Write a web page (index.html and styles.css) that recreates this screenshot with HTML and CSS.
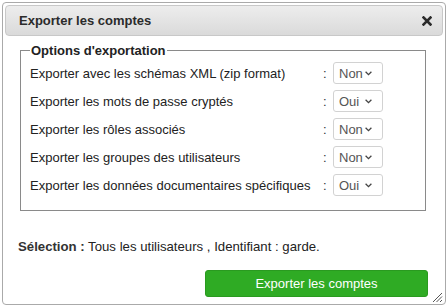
FILE: index.html
```html
<!DOCTYPE html>
<html lang="fr">
<head>
<meta charset="utf-8">
<title>Exporter les comptes</title>
<link rel="stylesheet" href="styles.css">
</head>
<body>
<div class="dialog">
  <div class="titlebar">
    <span class="title">Exporter les comptes</span>
    <svg class="close" width="10" height="10" viewBox="0 0 10 10"><path d="M1.5 1.5 L8.5 8.5 M8.5 1.5 L1.5 8.5" stroke="#2b2b2b" stroke-width="2.6" stroke-linecap="square"/></svg>
  </div>
  <div class="content">
    <fieldset class="options">
      <legend>Options d'exportation</legend>
      <div class="grid">
        <span class="label">Exporter avec les schémas XML (zip format)</span><span class="colon">:</span><span class="select">Non<svg class="chev" width="7" height="5" viewBox="0 0 7 5"><path d="M0.6 0.8 L3.5 3.7 L6.4 0.8" fill="none" stroke="#444" stroke-width="1.3"/></svg></span>
        <span class="label">Exporter les mots de passe cryptés</span><span class="colon">:</span><span class="select">Oui<svg class="chev" width="7" height="5" viewBox="0 0 7 5"><path d="M0.6 0.8 L3.5 3.7 L6.4 0.8" fill="none" stroke="#444" stroke-width="1.3"/></svg></span>
        <span class="label">Exporter les rôles associés</span><span class="colon">:</span><span class="select">Non<svg class="chev" width="7" height="5" viewBox="0 0 7 5"><path d="M0.6 0.8 L3.5 3.7 L6.4 0.8" fill="none" stroke="#444" stroke-width="1.3"/></svg></span>
        <span class="label">Exporter les groupes des utilisateurs</span><span class="colon">:</span><span class="select">Non<svg class="chev" width="7" height="5" viewBox="0 0 7 5"><path d="M0.6 0.8 L3.5 3.7 L6.4 0.8" fill="none" stroke="#444" stroke-width="1.3"/></svg></span>
        <span class="label">Exporter les données documentaires spécifiques</span><span class="colon">:</span><span class="select">Oui<svg class="chev" width="7" height="5" viewBox="0 0 7 5"><path d="M0.6 0.8 L3.5 3.7 L6.4 0.8" fill="none" stroke="#444" stroke-width="1.3"/></svg></span>
      </div>
    </fieldset>
    <p class="selection"><b>Sélection :</b> Tous les utilisateurs , Identifiant : garde.</p>
    <div class="actions">
      <button class="export">Exporter les comptes</button>
    </div>
  </div>
  <svg class="resize" width="11" height="11" viewBox="0 0 11 11"><path d="M10 1 L1 10 M10 4.5 L4.5 10 M10 8 L8 10" stroke="#555" stroke-width="1"/></svg>
</div>
</body>
</html>
```
FILE: styles.css
```css
* { box-sizing: border-box; }
html, body { margin: 0; padding: 0; background: #fff; }
body {
  font-family: "Liberation Sans", Arial, sans-serif;
  font-size: 13px;
  color: #222;
  padding: 2px;
}
.dialog {
  position: relative;
  width: 444px;
  height: 303px;
  border: 1px solid #aaa;
  border-radius: 4px;
  background: #fff;
  padding: 2px;
}
.titlebar {
  height: 31px;
  border: 1px solid #c8c8c8;
  border-radius: 4px;
  background: linear-gradient(#ededed, #dadada);
  display: flex;
  align-items: center;
  justify-content: space-between;
  padding: 0 10px 0 13px;
}
.title {
  font-weight: bold;
  color: #2b2b2b;
  font-size: 13px;
}
.close { display: block; margin-top: 1px; }
.content {
  padding: 7px 15px 0 13px;
}
.options {
  margin: 0 2px;
  border: 1px solid #8a8a8a;
  padding: 4px 9px 14px 9px;
}
.options legend {
  font-weight: bold;
  font-size: 13px;
  padding: 0 1px;
  color: #222;
}
.grid {
  display: grid;
  grid-template-columns: 293px 10px 50px;
  grid-auto-rows: 22px;
  row-gap: 6px;
  align-items: center;
  font-size: 13px;
}
.label { color: #222; white-space: nowrap; }
.colon { text-align: left; color: #333; }
.select {
  height: 22px;
  border: 1px solid #d2d2d2;
  border-radius: 3px;
  display: flex;
  align-items: center;
  justify-content: space-between;
  padding: 0 10px 0 5px;
  color: #555;
  background: #fff;
  font-size: 13px;
}
.chev { display: block; }
.selection {
  margin: 28px 0 0 0;
  color: #222;
  line-height: 15px;
  font-size: 13.2px;
}
.selection b { color: #333; }
.actions {
  display: flex;
  justify-content: flex-end;
  margin-top: 16px;
}
.export {
  width: 223px;
  height: 27px;
  background: #2fab24;
  border: 1px solid #2a9a20;
  border-radius: 3px;
  color: #fff;
  font-family: "Liberation Sans", Arial, sans-serif;
  font-size: 13px;
  padding: 0;
}
.resize {
  position: absolute;
  right: 2px;
  bottom: 1px;
}
```
